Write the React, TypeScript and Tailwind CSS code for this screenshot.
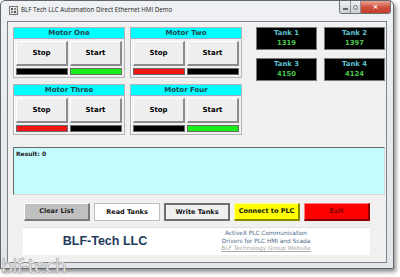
import React from "react";

const V = { fontFamily: '"DejaVu Sans", Verdana, sans-serif' };

function MotorPanel({ name, left, right }: { name: string; left: string; right: string }) {
  return (
    <div className="w-[112px] h-[51px] border border-[#b4b4b4] bg-[#f0f0f0] flex flex-col shadow-[inset_1px_1px_0_#ffffff]">
      <div
        className="h-[11px] bg-[#00ffff] border-b border-[#9ac] flex items-center justify-center text-[7px] font-bold text-[#1f4450] leading-none"
        style={V}
      >
        {name}
      </div>
      <div className="grid grid-cols-2 gap-[2px] px-[2px] pt-[2px]">
        <div
          className="h-[25px] bg-[#efefef] border-t border-l border-t-white border-l-white border-r-2 border-b-2 border-r-[#8c8c8c] border-b-[#8c8c8c] flex items-center justify-center text-[7px] font-bold text-black leading-none"
          style={V}
        >
          Stop
        </div>
        <div
          className="h-[25px] bg-[#efefef] border-t border-l border-t-white border-l-white border-r-2 border-b-2 border-r-[#8c8c8c] border-b-[#8c8c8c] flex items-center justify-center text-[7px] font-bold text-black leading-none"
          style={V}
        >
          Start
        </div>
        <div className={`h-[7px] border border-[#6a6a6a] ${left}`} />
        <div className={`h-[7px] border border-[#6a6a6a] ${right}`} />
      </div>
    </div>
  );
}

function Tank({ name, value }: { name: string; value: string }) {
  return (
    <div
      className="w-[61px] h-[23px] bg-black border border-[#7a7a7a] flex flex-col items-center justify-center gap-[3px] leading-none font-bold text-[6.8px]"
      style={V}
    >
      <span className="text-[#5ec4d4]">{name}</span>
      <span className="text-[#4cc84c]">{value}</span>
    </div>
  );
}

function Btn({ label, cls }: { label: string; cls: string }) {
  return (
    <div
      className={`w-[66px] h-[18px] flex items-center justify-center text-[6.5px] font-bold leading-none ${cls}`}
      style={V}
    >
      {label}
    </div>
  );
}

export default function App() {
  return (
    <div className="w-[400px] h-[277px] bg-white relative overflow-hidden">
      <div className="w-[394px] h-[269px] rounded-t-[5px] border border-[#5f656c] bg-gradient-to-b from-[#eef0f2] to-[#e2e5e9] flex flex-col shadow-[2px_3px_4px_rgba(0,0,0,0.45)]">
        {/* title bar */}
        <div className="h-[20px] flex items-start relative">
          <div className="flex items-center pl-[8px] pt-[5px] gap-[3px]">
            <svg width="9" height="9" viewBox="0 0 9 9">
              <rect x="0.5" y="0.5" width="8" height="8" fill="#e8e8e8" stroke="#777" />
              <rect x="2" y="2" width="2" height="2" fill="#555" />
              <rect x="5" y="2" width="2" height="2" fill="#888" />
              <rect x="2" y="5" width="2" height="2" fill="#888" />
              <rect x="5" y="5" width="2" height="2" fill="#555" />
            </svg>
            <span
              className="text-[6.2px] text-[#1a1a1a] leading-none"
              style={{ fontFamily: '"Open Sans", "Noto Sans", sans-serif' }}
            >
              BLF Tech LLC Automation Direct Ethernet HMI Demo
            </span>
          </div>
          <div className="absolute right-[2px] top-0 flex h-[13px] rounded-b-[3px] overflow-hidden border border-t-0 border-[#6d737a]">
            <div className="w-[11px] h-full bg-gradient-to-b from-[#eef1f4] to-[#c9ced4] border-r border-[#8a9096] flex items-center justify-center">
              <div className="w-[5px] h-[2px] bg-white border border-[#666] mt-[3px]" />
            </div>
            <div className="w-[10px] h-full bg-gradient-to-b from-[#eef1f4] to-[#c9ced4] border-r border-[#8a9096] flex items-center justify-center">
              <div className="w-[5px] h-[5px] rounded-full border border-[#777]" />
            </div>
            <div className="w-[29px] h-full bg-gradient-to-b from-[#e9a496] via-[#d2513f] to-[#c43b2a] flex items-center justify-center text-white text-[7px] font-bold leading-none" style={V}>
              ×
            </div>
          </div>
        </div>
        {/* client */}
        <div className="mx-[6px] h-[242px] border border-[#7d838a] bg-[#f0f0f0] flex flex-col">
          <div className="flex pl-[5px] pt-[5px]">
            <div className="grid grid-cols-[112px_112px] gap-x-[5px] gap-y-[6px]">
              <MotorPanel name="Motor One" left="bg-black" right="bg-[#16f016]" />
              <MotorPanel name="Motor Two" left="bg-[#f01414]" right="bg-black" />
              <MotorPanel name="Motor Three" left="bg-[#f01414]" right="bg-black" />
              <MotorPanel name="Motor Four" left="bg-black" right="bg-[#16f016]" />
            </div>
            <div className="ml-[14px] grid grid-cols-[61px_61px] gap-x-[7px] gap-y-[8px] h-fit">
              <Tank name="Tank 1" value="1319" />
              <Tank name="Tank 2" value="1397" />
              <Tank name="Tank 3" value="4150" />
              <Tank name="Tank 4" value="4124" />
            </div>
          </div>
          <div className="ml-[5px] mt-[12px] w-[372px] h-[48px] bg-[#c2fcfc] border-t border-l border-[#6a6a6a] border-r border-b border-r-[#d8d8d8] border-b-[#d8d8d8] px-[2px] pt-[3px]">
            <span className="text-[6px] font-bold text-[#222] leading-none block" style={V}>
              Result: 0
            </span>
          </div>
          <div className="ml-[16px] mt-[8px] flex gap-[4px]">
            <Btn label="Clear List" cls="bg-[#c0c0c0] text-[#222] border-t border-l border-white border-r-2 border-b-2 border-r-[#7a7a7a] border-b-[#7a7a7a]" />
            <Btn label="Read Tanks" cls="bg-white text-[#111] border border-[#bdbdbd]" />
            <Btn label="Write Tanks" cls="bg-[#f0f0f0] text-[#111] border-2 border-[#6e6e6e]" />
            <Btn label="Connect to PLC" cls="bg-[#ffff00] text-[#111] border-r-2 border-b-2 border-r-[#8a8a00] border-b-[#8a8a00] border-t border-l border-[#ffffa0]" />
            <Btn label="Exit" cls="bg-[#ff0000] text-[#7a0000] border-r-2 border-b-2 border-r-[#8a0000] border-b-[#8a0000] border-t border-l border-[#ff8080]" />
          </div>
          <div className="ml-[15px] mt-[6px] w-[347px] h-[28px] bg-white border-t border-[#e0e0e0] flex items-center">
            <div
              className="w-[164px] text-center text-[12.5px] font-bold text-[#1e3a5c] leading-none"
              style={{ fontFamily: '"Liberation Sans", Arial, sans-serif' }}
            >
              BLF-Tech LLC
            </div>
            <div className="w-[158px] flex flex-col items-center text-[5.8px] leading-[7.5px] text-[#4a6a88]" style={V}>
              <span>ActiveX PLC Communication</span>
              <span>Drivers for PLC HMI and Scada</span>
              <span className="text-[#a8a8a8] underline">BLF Technology Group Website</span>
            </div>
          </div>
        </div>
      </div>
      <div
        className="absolute left-[1px] top-[257px] text-[19px] leading-none text-[#f4f4f4] [-webkit-text-stroke:0.7px_#a8a8a8] tracking-[-0.8px]"
        style={{ fontFamily: '"DejaVu Sans", sans-serif' }}
      >
        blf-tech
      </div>
    </div>
  );
}
